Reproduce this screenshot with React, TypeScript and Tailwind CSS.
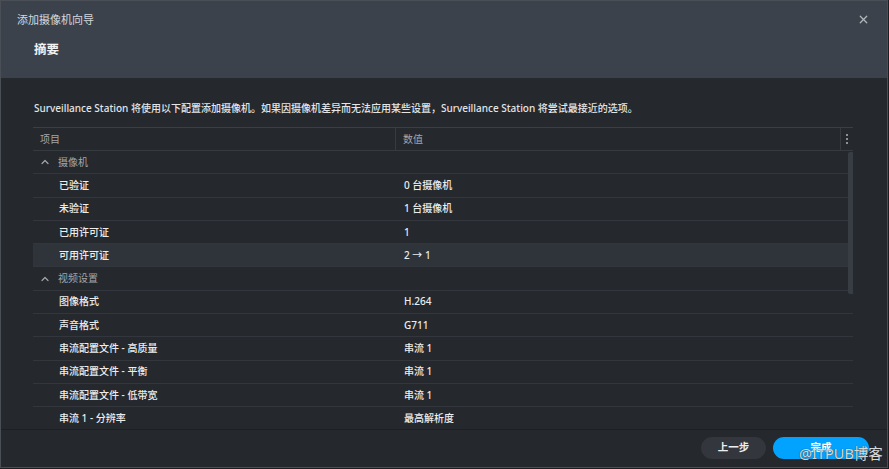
import { X, ChevronUp } from 'lucide-react'

type Row = { kind: 'group' | 'item'; label: string; value?: string; active?: boolean }

const ROWS: Row[] = [
  { kind: 'group', label: '摄像机' },
  { kind: 'item', label: '已验证', value: '0 台摄像机' },
  { kind: 'item', label: '未验证', value: '1 台摄像机' },
  { kind: 'item', label: '已用许可证', value: '1' },
  { kind: 'item', label: '可用许可证', value: '2 → 1', active: true },
  { kind: 'group', label: '视频设置' },
  { kind: 'item', label: '图像格式', value: 'H.264' },
  { kind: 'item', label: '声音格式', value: 'G711' },
  { kind: 'item', label: '串流配置文件 - 高质量', value: '串流 1' },
  { kind: 'item', label: '串流配置文件 - 平衡', value: '串流 1' },
  { kind: 'item', label: '串流配置文件 - 低带宽', value: '串流 1' },
  { kind: 'item', label: '串流 1 - 分辨率', value: '最高解析度' },
]

export default function App() {
  return (
    <div className="w-[889px] h-[469px] bg-[#1c1e22] font-['Noto_Sans','Noto_Sans_CJK_SC',sans-serif] overflow-hidden">
      <div className="relative w-[888px] h-[468px] flex flex-col bg-[#25282d] border border-[#4a4e55]">
        {/* Header */}
        <div className="h-[77px] shrink-0 bg-[#3c424b] flex flex-col">
          <div className="flex items-center justify-between pl-[16px] pr-[17px] pt-[9px] h-[28px]">
            <span className="text-[11px] text-[#d6d8db] leading-none">添加摄像机向导</span>
            <X size={13} strokeWidth={2.2} className="text-[#b4b7bc]" />
          </div>
          <div className="pl-[33px] pt-[15px] text-[12.5px] font-bold text-[#f0f1f2] leading-none">摘要</div>
        </div>

        {/* Body */}
        <div className="flex-1 min-h-0 flex flex-col pt-[23px]">
          <p className="pl-[33px] text-[10px] leading-[14px] text-[#e4e5e7] font-medium">
            Surveillance Station 将使用以下配置添加摄像机。如果因摄像机差异而无法应用某些设置，Surveillance Station 将尝试最接近的选项。
          </p>

          <div className="relative mt-[12px] ml-[32px] w-[820px] flex-1 min-h-0 overflow-hidden border-t border-[#3a3e45]">
            {/* Header row */}
            <div className="flex h-[23px] border-b border-[#363a41] text-[10px] text-[#a3a6ab]">
              <div className="w-[363px] flex items-center pl-[7px] border-r border-[#363a41]">项目</div>
              <div className="flex-1 flex items-center pl-[7px] border-r border-[#363a41]">数值</div>
              <div className="w-[12px] flex flex-col items-center justify-center gap-[2px]">
                <span className="w-[2px] h-[2px] bg-[#8d9196]" />
                <span className="w-[2px] h-[2px] bg-[#8d9196]" />
                <span className="w-[2px] h-[2px] bg-[#8d9196]" />
              </div>
            </div>

            {ROWS.map((r, i) =>
              r.kind === 'group' ? (
                <div key={i} className="flex items-center h-[23.3px] border-b border-[#33373d] text-[10px] text-[#a3a6ab]">
                  <ChevronUp size={12} strokeWidth={2.4} className="ml-[6px] mr-[7px] text-[#a3a6ab]" />
                  <span>{r.label}</span>
                </div>
              ) : (
                <div
                  key={i}
                  className={`flex items-center h-[23.3px] border-b border-[#33373d] text-[10px] font-medium text-[#eceded] ${r.active ? 'bg-[#2f333a]' : ''}`}
                >
                  <div className="w-[364px] pl-[26px]">{r.label}</div>
                  <div className="flex-1 pl-[7px]">{r.value}</div>
                </div>
              )
            )}

            {/* Scrollbar */}
            <div className="absolute left-[815px] top-[24px] w-[6px] h-[142px] rounded-[2px] bg-[#383c43]" />
          </div>
        </div>

        {/* Footer */}
        <div className="h-[38px] shrink-0 border-t border-[#1d1f23] flex items-start justify-end gap-[7px] pt-[7px] pr-[18px]">
          <button className="w-[65px] h-[22px] rounded-full bg-[#33363c] text-[10.5px] font-semibold text-[#eceded]">上一步</button>
          <button className="w-[96px] h-[22px] rounded-full bg-[#01a3ff] text-[10.5px] font-semibold text-white">完成</button>
        </div>

        {/* Watermark */}
        <span className="absolute left-[798px] top-[445px] text-[14.5px] leading-none text-[#d8d8d8] [text-shadow:0_0_1px_#333]">
          @ITPUB博客
        </span>
      </div>
    </div>
  )
}
